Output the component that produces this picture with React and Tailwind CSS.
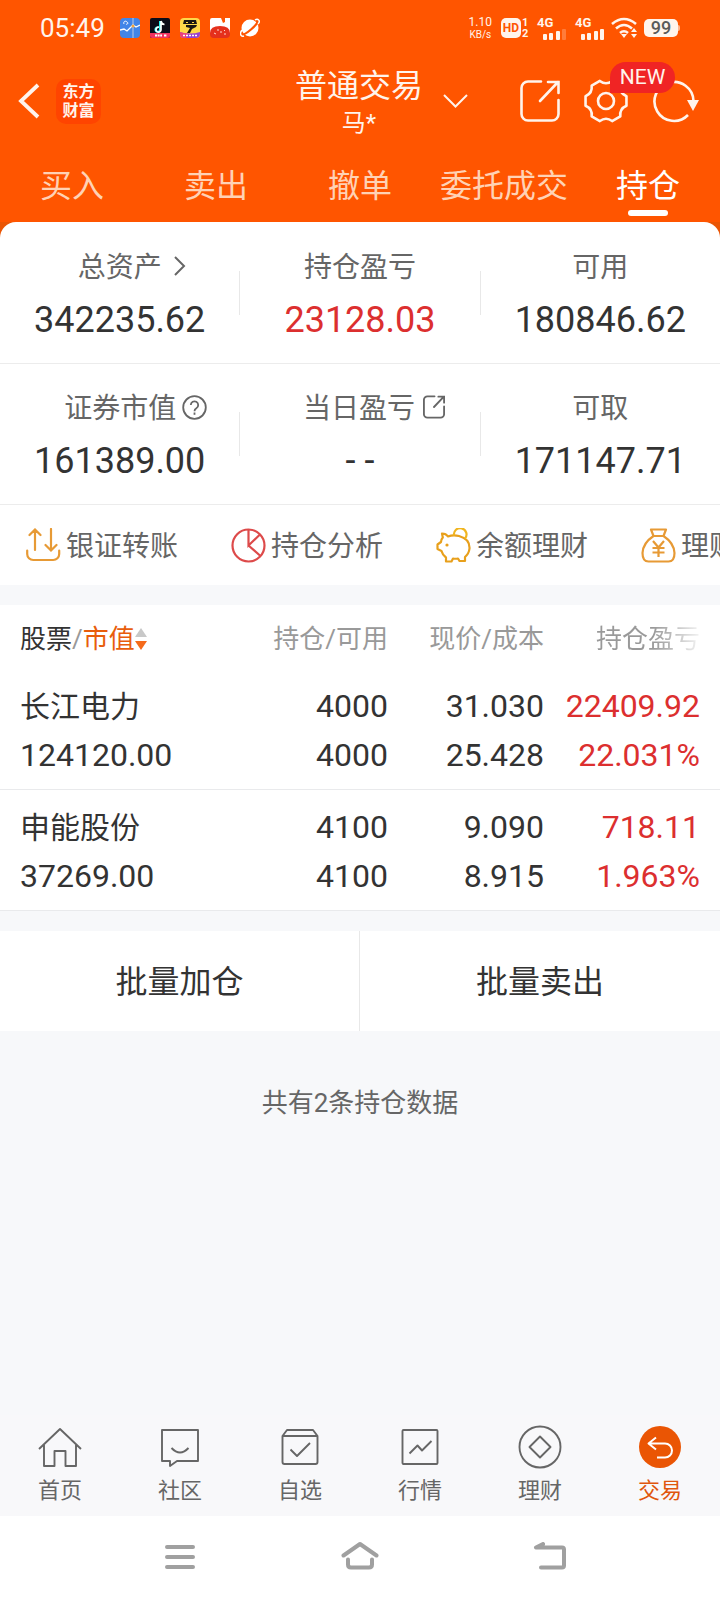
import { useState } from "react";
import clsx from "clsx";

const tabs = ["买入", "卖出", "撤单", "委托成交", "持仓"];

const holdings = [
  {
    name: "长江电力",
    value: "124120.00",
    amount: "4000",
    available: "4000",
    price: "31.030",
    cost: "25.428",
    profit: "22409.92",
    rate: "22.031%",
  },
  {
    name: "申能股份",
    value: "37269.00",
    amount: "4100",
    available: "4100",
    price: "9.090",
    cost: "8.915",
    profit: "718.11",
    rate: "1.963%",
  },
];

// six flat teeth with a curved dip between each pair
const polar = (deg, r) => {
  const a = (deg * Math.PI) / 180;
  return `${(22 + r * Math.cos(a)).toFixed(2)} ${(22 + r * Math.sin(a)).toFixed(2)}`;
};

const gearPath =
  [0, 60, 120, 180, 240, 300]
    .map((d, i) => `${i === 0 ? "M" : "L"}${polar(d + 13, 21)}Q${polar(d + 30, 15.5)} ${polar(d + 47, 21)}`)
    .join("") + "Z";

const Signal = ({ weak }) => (
  <div className="flex flex-col">
    <span className="text-[13px] leading-[12px] font-bold">4G</span>
    <svg className="ml-[6px]" width="24" height="11" viewBox="0 0 24 11" fill="currentColor">
      <rect x="0" y="5" width="4" height="6" rx="1" />
      <rect x="6" y="4" width="4" height="7" rx="1" />
      <rect x="13" y="2" width="4" height="9" rx="1" />
      <rect x="19" y="0" width="4" height="11" rx="1" opacity={weak ? 0.25 : 1} />
    </svg>
  </div>
);

const StatusBar = () => (
  <div className="flex h-14 items-center justify-between pr-10 pl-10">
    <div className="flex items-center">
      <span className="w-20 text-[26px] leading-8">05:49</span>
      <div className="flex gap-[10px]">
        <svg width="20" height="20" viewBox="0 0 20 20">
          <rect width="20" height="20" rx="4" fill="#4285e8" />
          <path d="M13 0v20" stroke="#b9c9e6" strokeWidth="1" />
          <path d="M0 12l4-1 3 2 6-6 3 2 4-2" fill="none" stroke="#fff" strokeWidth="1.3" />
          <path d="M4 6c-1-2 1-4 3-2 2 1 0 3-1 2" fill="none" stroke="#fff" />
          <circle cx="13" cy="8" r="1.5" fill="#f6a53a" />
        </svg>
        <svg width="20" height="20" viewBox="0 0 20 20">
          <rect width="20" height="20" rx="2" fill="#0c0c18" />
          <path d="M10 3v8.500a2.300 2.300 0 1 1-2-2.300" fill="none" stroke="#25f4ee" strokeWidth="2" />
          <path d="M11 3v8.500a2.500 2.500 0 1 1-2-2.300M11 3q.5 3 3.500 3.500" fill="none" stroke="#fff" strokeWidth="1.700" />
          <path d="M0 15h20v3a2 2 0 0 1-2 2H2a2 2 0 0 1-2-2z" fill="#f0335f" />
          <path d="M5 17.500h7M14 17.500h3" stroke="#fff" strokeWidth="2" strokeDasharray="2 .6" />
        </svg>
        <svg width="20" height="20" viewBox="0 0 20 20">
          <rect width="20" height="20" rx="4" fill="#ffd94a" />
          <path d="M4 2h12l1 4H3z" fill="#1b1712" />
          <path d="M6 7h11l-1 2-4 2-2 4H7l3-5-4-1z" fill="#1b1712" />
          <path d="M6 4.500h2M12 4.500h2" stroke="#ffd94a" />
          <path d="M0 14q10 3 20 0v2a4 4 0 0 1-4 4H4a4 4 0 0 1-4-4z" fill="#9a3fd0" />
          <path d="M0 14q4 1.500 8 1.500L6 20H4a4 4 0 0 1-4-4z" fill="#ef3f7a" />
          <path d="M3 17.500h14" stroke="#fff" strokeWidth="1.500" strokeDasharray="2 1" />
        </svg>
        <svg width="20" height="20" viewBox="0 0 20 20">
          <path d="M0 2q0-2 2-2h9l2 5 2-1V0h5v16H0z" fill="#fff" />
          <path d="M0 15Q0 8 10 8t10 7v1a4 4 0 0 1-4 4H4a4 4 0 0 1-4-4z" fill="#e5301c" />
          <path d="M4 15l2 1M8 11v2M11 13v2M15 12l-1 1M14 16h2" stroke="#ffd9cf" />
        </svg>
        <svg width="20" height="20" viewBox="0 0 20 20">
          <circle cx="10" cy="10" r="8.500" fill="#fff" />
          <path d="M1 17C6 17 17 7 18 3" stroke="#ff5500" strokeWidth="2.200" fill="none" />
          <path d="M2 12c-3 4-1 7 2 6M15 2c3-2 6 1 3 4" stroke="#fff" strokeWidth="1.500" fill="none" />
        </svg>
      </div>
    </div>
    <div className="flex items-center">
      <div className="mr-[9px] flex flex-col items-center">
        <span className="text-[12px] leading-[14px]">1.10</span>
        <span className="text-[10px] leading-[12px]">KB/s</span>
      </div>
      <span className="flex h-5 w-5 items-center justify-center rounded-[5px] bg-[#fff4ec] text-[12px] font-bold text-[#ff5500]">
        HD
      </span>
      <div className="mr-2 ml-px w-[7px] text-[11px] leading-[11px] font-bold">
        <div>1</div>
        <div>2</div>
      </div>
      <Signal weak />
      <div className="ml-2">
        <Signal />
      </div>
      <svg className="ml-[6px]" width="28" height="22" viewBox="0 0 28 22" fill="none" stroke="currentColor" strokeWidth="2.600">
        <path d="M1 7q12-10 24 0" />
        <path d="M5 11.500q8-7 16 0" />
        <path d="M9 16q4-3.500 8 0" />
        <path d="M10 17l3 4 3-4z" fill="currentColor" stroke="none" />
        <path d="M20 15l3-4 3 4zM20 17l3 4 3-4z" fill="currentColor" stroke="none" />
      </svg>
      <span className="ml-[5px] flex h-[18px] w-[34px] items-center justify-center rounded-[5px] bg-[#fff4ec] text-[18px] leading-[18px] font-medium text-[#5a5a5a]">
        99
      </span>
      <span className="h-[6px] w-[2px] rounded-r bg-[#ffb48c]" />
    </div>
  </div>
);

const ShareIcon = ({ className, strokeWidth = 2 }) => (
  <svg className={className} viewBox="0 0 40 44" fill="none" stroke="currentColor" strokeWidth={strokeWidth} strokeLinecap="round">
    <path d="M21 2.500H8a6.500 6.500 0 0 0-6.500 6.500v26A6.500 6.500 0 0 0 8 41.500h24a6.500 6.500 0 0 0 6.500-6.500V21" />
    <path d="M20 22L38 3M28 3h10.500v11" />
  </svg>
);

const Header = () => (
  <div className="grid h-[90px] grid-cols-[1fr_auto_1fr] items-center pr-5 pl-[18px]">
    <div className="flex items-center gap-4">
      <button aria-label="返回">
        <svg width="22" height="36" viewBox="0 0 22 36" fill="none" stroke="currentColor" strokeWidth="3.800">
          <path d="M20 2L3 18l17 16" />
        </svg>
      </button>
      <div className="flex h-[45px] w-[45px] flex-col items-center justify-center rounded-[10px] bg-[#ff4400] text-[16px] leading-[19px] font-bold">
        <span>东方</span>
        <span>财富</span>
      </div>
    </div>
    <div className="pt-px text-center">
      <h1 className="text-[32px] leading-[42px]">普通交易</h1>
      <div className="text-[24px] leading-8">马*</div>
    </div>
    <div className="flex items-center">
      <button aria-label="切换账户" className="ml-5">
        <svg width="25" height="14" viewBox="0 0 25 14" fill="none" stroke="currentColor" strokeWidth="2">
          <path d="M1 1l11.500 11.500L24 1" />
        </svg>
      </button>
      <div className="ml-auto flex items-center gap-6">
        <button aria-label="分享">
          <ShareIcon className="h-11 w-10" strokeWidth={2.6} />
        </button>
        <button aria-label="设置" className="relative">
          <svg width="44" height="44" viewBox="0 0 44 44" fill="none" stroke="currentColor" strokeWidth="2.600" strokeLinejoin="round">
            <path d={gearPath} />
            <circle cx="22" cy="22" r="8" />
          </svg>
          <span className="absolute -top-[17px] left-[26px] z-10 flex h-[31px] w-[65px] items-center justify-center rounded-full rounded-bl-none bg-[#f02424] text-[21px]">
            NEW
          </span>
        </button>
        <button aria-label="刷新">
          <svg width="48" height="44" viewBox="0 0 48 44" fill="none" stroke="currentColor" strokeWidth="2.600">
            <path d="M36 36A19.500 19.500 0 1 1 41.500 22" />
            <path d="M35 21h12l-6 11z" fill="currentColor" stroke="none" />
          </svg>
        </button>
      </div>
    </div>
  </div>
);

const Tabs = () => {
  const [active, setActive] = useState("持仓");

  return (
    <nav className="grid h-[76px] grid-cols-5">
      {tabs.map((tab) => (
        <button
          key={tab}
          onClick={() => setActive(tab)}
          className={clsx(
            "flex flex-col items-center pt-5 text-[32px] leading-[40px] whitespace-nowrap",
            active === tab ? "text-white" : "text-[#ffd2b5]"
          )}
        >
          {tab}
          {active === tab && <span className="mt-1 h-[6px] w-10 rounded-full bg-white" />}
        </button>
      ))}
    </nav>
  );
};

const Stat = ({ label, icon, value, labelClass, valueClass = "text-[#333]" }) => (
  <div className="flex h-[140px] flex-col items-center pt-[25px]">
    <div className={clsx("flex items-center text-[28px] leading-[40px] text-[#666]", labelClass)}>
      {label}
      {icon}
    </div>
    <div className={clsx("mt-[6px] text-[36px] leading-[52px]", valueClass)}>{value}</div>
  </div>
);

const StatRow = ({ children }) => (
  <div className="grid grid-cols-[1fr_1px_1fr_1px_1fr] items-center border-b border-[#ececec]">
    {children}
  </div>
);

const StatDivider = () => <span className="h-11 bg-[#e8e8e8]" />;

const Assets = () => (
  <section className="pt-px">
    <StatRow>
      <Stat
        label="总资产"
        labelClass="pl-6"
        value="342235.62"
        icon={
          <svg className="mb-1 ml-3" width="12" height="20" viewBox="0 0 12 20" fill="none" stroke="currentColor" strokeWidth="2">
            <path d="M1 1l9 9-9 9" />
          </svg>
        }
      />
      <StatDivider />
      <Stat label="持仓盈亏" value="23128.03" valueClass="text-[#dc2f2f]" />
      <StatDivider />
      <Stat label="可用" value="180846.62" />
    </StatRow>
    <StatRow>
      <Stat
        label="证券市值"
        labelClass="pl-8"
        value="161389.00"
        icon={
          <svg className="mb-1 ml-[6px]" width="25" height="25" viewBox="0 0 25 25" fill="none" stroke="currentColor" strokeWidth="1.800">
            <circle cx="12.500" cy="12.500" r="11.300" />
            <path d="M8.800 10a3.700 3.700 0 1 1 5.600 3.200q-1.900 1.100-1.900 3" />
            <path d="M12.500 17.500v2.300" />
          </svg>
        }
      />
      <StatDivider />
      <Stat
        label="当日盈亏"
        labelClass="pl-7"
        value="- -"
        icon={<ShareIcon className="mb-1 ml-2 h-6 w-[22px]" strokeWidth={3.4} />}
      />
      <StatDivider />
      <Stat label="可取" value="171147.71" />
    </StatRow>
  </section>
);

const Shortcut = ({ label, children }) => (
  <a href="#" className="flex w-[205px] shrink-0 items-center gap-[5px] text-[28px] leading-[40px] text-[#666]">
    {children}
    <span className="pt-1">{label}</span>
  </a>
);

const Shortcuts = () => (
  <nav className="flex h-20 overflow-hidden pl-[26px] whitespace-nowrap">
    <Shortcut label="银证转账">
      <svg width="35" height="35" viewBox="0 0 35 35" fill="none" stroke="#e79a35" strokeWidth="2.200" strokeLinecap="round">
        <path d="M9 22V2M3.500 7L9 1.500 14.500 7M25 1v21M19.500 17l5.500 5.500 5.500-5.500" />
        <path d="M1.200 22.500v3.500a6 6 0 0 0 6 6h20a6 6 0 0 0 6-6v-3.500" />
      </svg>
    </Shortcut>
    <Shortcut label="持仓分析">
      <svg width="35" height="35" viewBox="0 0 35 35" fill="none" stroke="#dd4a4a" strokeWidth="2.200">
        <circle cx="17.500" cy="17.500" r="16" />
        <path d="M17.500 1.500v16L29 6.500M17.500 17.500L29.500 28" />
      </svg>
    </Shortcut>
    <Shortcut label="余额理财">
      <svg width="35" height="35" viewBox="0 0 35 35" fill="none" stroke="#e8a01c" strokeWidth="2.200" strokeLinejoin="round">
        <path d="M6 5.500q4 0 6 3Q17 6.500 23 8q11 3 10.500 12.500-.5 5-4.500 8.500v4h-5.500l-1.500-2.500q-3 .5-5 0L15.500 33.500H10v-4q-3.500-2.500-4.500-6.500L1.500 21v-4.500L5 14q0-2.500 1.800-4.500z" />
        <path d="M18 7.500a6.300 6.300 0 1 1 11 3" stroke="#f0b51f" />
        <circle cx="11" cy="17" r="1.600" fill="#e8a01c" stroke="none" />
      </svg>
    </Shortcut>
    <Shortcut label="理财">
      <svg width="35" height="35" viewBox="0 0 35 35" fill="none" stroke="#e79a35" strokeWidth="2.200" strokeLinejoin="round">
        <path d="M10 1.500h15L22.500 8h-10zM12.500 8Q2 15 1.500 25q0 8.500 6 8.500h20q6 0 6-8.500Q33 15 22.500 8" />
        <path d="M12 13l5.500 6.500L23 13M17.500 19.500V29M11.500 20h12M11.500 24.500h12" />
      </svg>
    </Shortcut>
  </nav>
);

const Cell = ({ top, bottom, className, topClass }) => (
  <td className={clsx("pt-[13px] pb-[9px] text-[32px] leading-[49px]", className)}>
    <div className={topClass}>{top}</div>
    <div>{bottom}</div>
  </td>
);

const Holdings = () => (
  <table className="w-full table-fixed bg-white text-right text-[#333]">
    <thead>
      <tr className="h-16 text-[26px] leading-8 text-[#999]">
        <th className="pt-1 pl-5 text-left font-normal">
          <button className="flex items-center">
            <span className="text-[#333]">股票</span>/
            <span className="text-[#e85d0c]">市值</span>
            <svg width="12" height="24" viewBox="0 0 12 24">
              <path d="M0 10L6 1l6 9z" fill="#c8c8c8" />
              <path d="M0 14h12l-6 9z" fill="#f56a1a" />
            </svg>
          </button>
        </th>
        <th className="w-[142px] pt-1 font-normal">持仓/可用</th>
        <th className="w-[156px] pt-1 font-normal">现价/成本</th>
        <th className="w-[176px] pt-1 pr-5 font-normal">
          <span className="bg-linear-to-r from-[#999] from-55% to-[#f4f4f4] bg-clip-text text-transparent">持仓盈亏</span>
        </th>
      </tr>
    </thead>
    <tbody>
      {holdings.map((item) => (
        <tr key={item.name} className="border-b border-[#e9eaec]">
          <Cell
            className="pl-5 text-left"
            topClass="text-[30px]"
            top={item.name}
            bottom={item.value}
          />
          <Cell top={item.amount} bottom={item.available} />
          <Cell top={item.price} bottom={item.cost} />
          <Cell className="pr-5 text-[#dc2f2f]" top={item.profit} bottom={item.rate} />
        </tr>
      ))}
    </tbody>
  </table>
);

const NavItem = ({ label, active, children }) => (
  <a
    href="#"
    className={clsx(
      "flex flex-col items-center text-[22px] leading-[30px]",
      active ? "text-[#e0560d]" : "text-[#666]"
    )}
  >
    <svg className="mb-[7px]" width="44" height="44" viewBox="0 0 44 44" fill="none" stroke="currentColor" strokeWidth="1.900" strokeLinejoin="round">
      {children}
    </svg>
    {label}
  </a>
);

const BottomNav = () => (
  <nav className="grid grid-cols-6 bg-[#f8f8fa] py-[10px]">
    <NavItem label="首页">
      <path d="M1 24L22 4l21 20M6 20v21h10.500V26h11v15H38V20" />
    </NavItem>
    <NavItem label="社区">
      <path d="M4 5h36v31H19l-7 5v-5H4z" />
      <path d="M13.500 23q8.500 9 17 0" />
    </NavItem>
    <NavItem label="自选">
      <path d="M4.500 11L9 5h26l4.500 6v26q0 2-2 2h-31q-2 0-2-2zM4.500 11h35M12.500 24.500l6.500 6.500 13-13" />
    </NavItem>
    <NavItem label="行情">
      <rect x="4.500" y="5" width="35" height="34" rx="1" />
      <path d="M11.500 28.500l8-8 4.500 5L33.500 16" />
    </NavItem>
    <NavItem label="理财">
      <circle cx="22" cy="22" r="20.500" />
      <path d="M22 11.500L32.500 22 22 32.500 11.500 22z" />
    </NavItem>
    <NavItem label="交易" active>
      <circle cx="22" cy="22" r="21" fill="#ea5504" stroke="none" />
      <path d="M18 12.500l-7.500 6 7.500 6M10.500 18.500H27a7 7 0 0 1 0 14h-8" stroke="#fff" strokeWidth="2" />
    </NavItem>
  </nav>
);

const SystemBar = () => (
  <div className="flex h-[84px] items-center justify-center gap-36 bg-white pl-[10px] text-[#a0a0a0]">
    <button aria-label="菜单">
      <svg width="34" height="32" viewBox="0 0 34 32" fill="none" stroke="currentColor" strokeWidth="4" strokeLinecap="round">
        <path d="M4 5h26M4 15h26M4 25h26" />
      </svg>
    </button>
    <button aria-label="主页">
      <svg width="38" height="32" viewBox="0 0 38 32" fill="none" stroke="currentColor" strokeWidth="4" strokeLinecap="round" strokeLinejoin="round">
        <path d="M2.500 13.500L19 2l16.500 11.500M7 17.500v5q0 3 3 3h18q3 0 3-3v-5" />
      </svg>
    </button>
    <button aria-label="后退" className="pl-[10px]">
      <svg width="34" height="32" viewBox="0 0 34 32" fill="none" stroke="currentColor" strokeWidth="4" strokeLinecap="round" strokeLinejoin="round">
        <path d="M10 2L3 5.500h26q2 0 2 2v16q0 2-2 2H8" />
      </svg>
    </button>
  </div>
);

const App = () => {
  return (
    <div className="flex min-h-screen flex-col bg-[#f7f8fa] font-[Roboto,'Noto_Sans_CJK_SC',sans-serif]">
      <header className="bg-[#ff5500] text-[#fff4ec]">
        <StatusBar />
        <Header />
        <Tabs />
      </header>

      <div className="bg-[#ea5504]">
        <div className="rounded-t-[16px] bg-white">
          <Assets />
          <Shortcuts />
        </div>
      </div>

      <main className="mt-5 flex-1">
        <Holdings />
        <div className="mt-5 grid h-[100px] grid-cols-2 divide-x divide-[#e8e8e8] bg-white text-[32px] text-[#333]">
          <button className="pt-[2px]">批量加仓</button>
          <button className="pt-[2px]">批量卖出</button>
        </div>
        <p className="mt-14 text-center text-[26px] leading-8 text-[#666]">共有2条持仓数据</p>
      </main>

      <BottomNav />
      <SystemBar />
    </div>
  );
};

export default App;
